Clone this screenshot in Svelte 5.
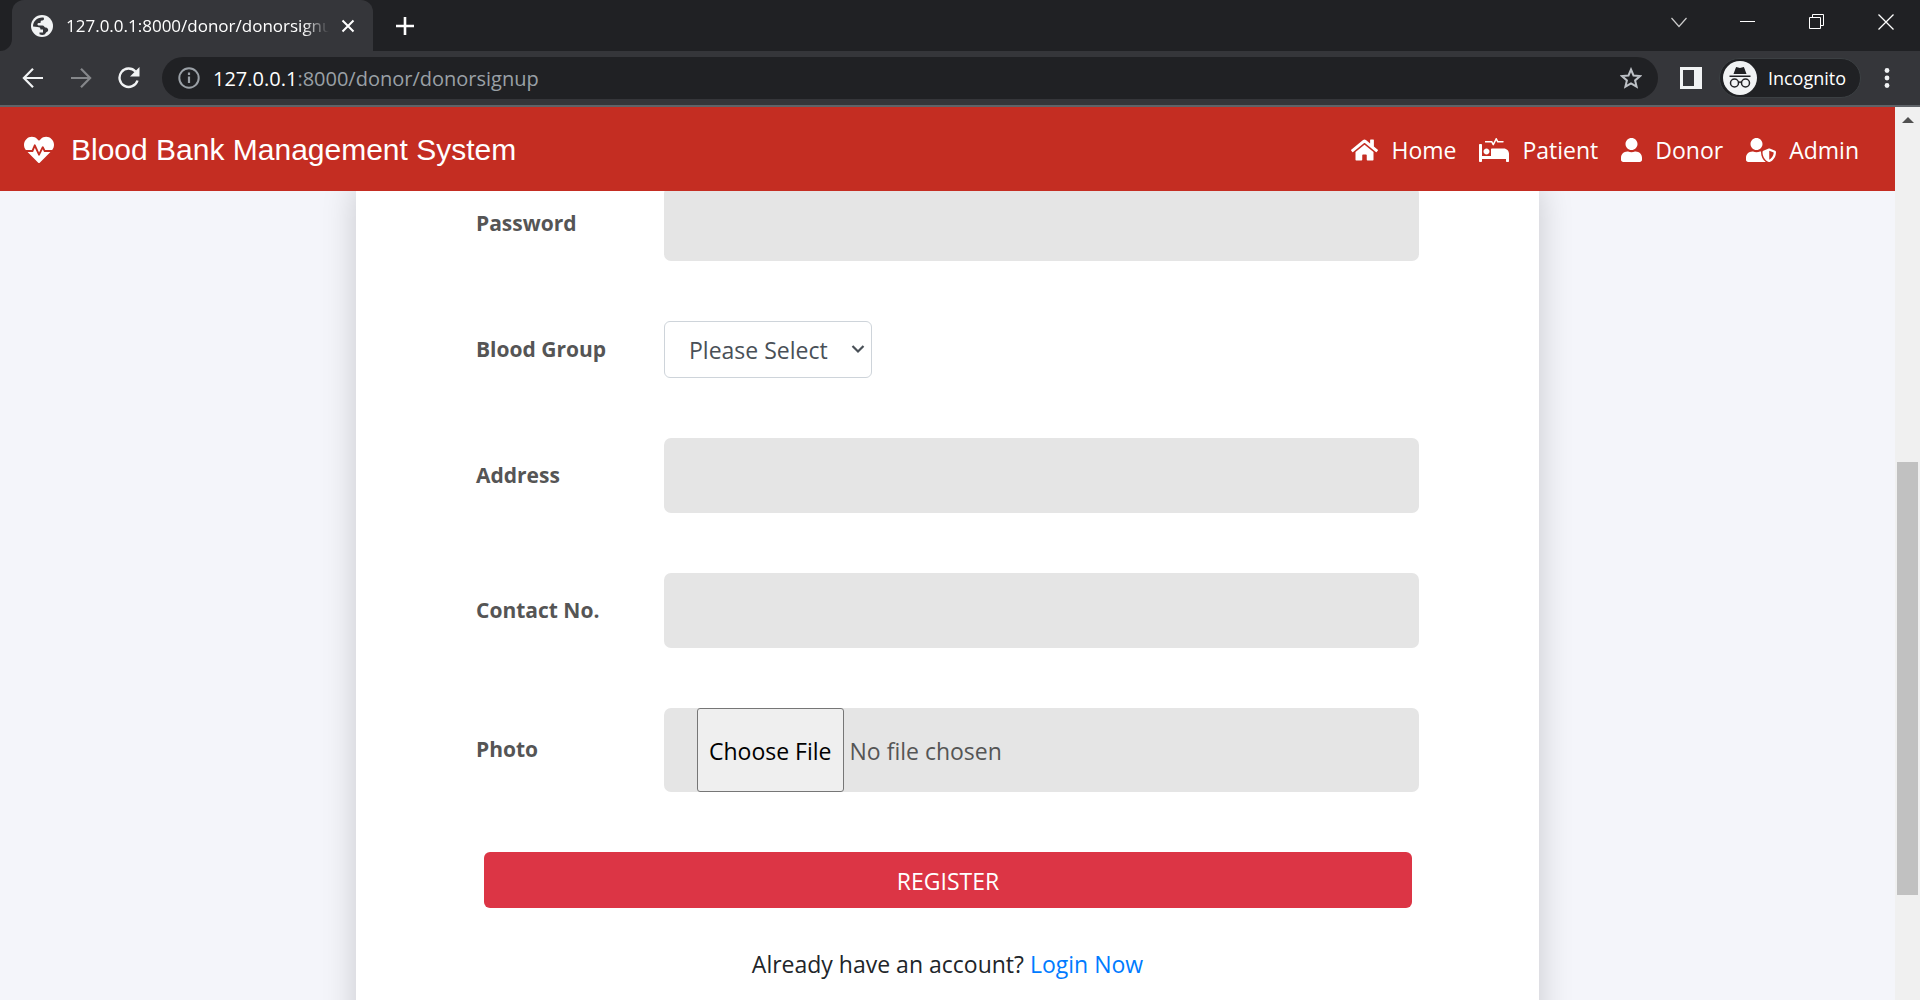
<script>
  const fields = [
    { id: 'address', label: 'Address', type: 'text' },
    { id: 'contact', label: 'Contact No.', type: 'text' }
  ];
  const groups = ['Please Select', 'O+', 'O-', 'A+', 'A-', 'B+', 'B-', 'AB+', 'AB-'];
  const nav = [
    { label: 'Home', size: 'w27', box: '0 0 576 512', d: 'M280.37 148.26L96 300.11V464a16 16 0 0 0 16 16l112.06-.29a16 16 0 0 0 15.92-16V368a16 16 0 0 1 16-16h64a16 16 0 0 1 16 16v95.64a16 16 0 0 0 16 16.05L464 480a16 16 0 0 0 16-16V300L295.67 148.26a12.19 12.19 0 0 0-15.3 0zM571.6 251.47L488 182.56V44.05a12 12 0 0 0-12-12h-56a12 12 0 0 0-12 12v72.61L318.47 43a48 48 0 0 0-61 0L4.34 251.47a12 12 0 0 0-1.6 16.9l25.5 31A12 12 0 0 0 45.15 301l235.22-193.74a12.19 12.19 0 0 1 15.3 0L530.9 301a12 12 0 0 0 16.9-1.6l25.5-31a12 12 0 0 0-1.7-16.93z' },
    { label: 'Patient', size: 'w30', box: '0 0 640 512', d: 'M528 224H272c-8.8 0-16 7.2-16 16v144H64V144c0-8.8-7.2-16-16-16H16c-8.8 0-16 7.2-16 16v352c0 8.8 7.2 16 16 16h32c8.8 0 16-7.2 16-16v-48h512v48c0 8.8 7.2 16 16 16h32c8.8 0 16-7.2 16-16V336c0-61.9-50.1-112-112-112zM136 96h126.1l27.6 55.2c5.9 11.8 22.7 11.8 28.6 0L368 51.8 390.1 96H512c8.8 0 16-7.2 16-16s-7.2-16-16-16H409.9L382.3 8.8C376.4-3 359.6-3 353.7 8.8L304 108.2l-19.9-39.8c-1.4-2.7-4.1-4.4-7.2-4.4H136c-4.4 0-8 3.6-8 8v16c0 4.4 3.6 8 8 8zm24 256c35.3 0 64-28.7 64-64s-28.7-64-64-64-64 28.7-64 64 28.7 64 64 64z' },
    { label: 'Donor', size: 'w21', box: '0 0 448 512', d: 'M224 256c70.7 0 128-57.3 128-128S294.7 0 224 0 96 57.3 96 128s57.3 128 128 128zm89.6 32h-16.7c-22.2 10.2-46.9 16-72.9 16s-50.6-5.8-72.9-16h-16.7C60.2 288 0 348.2 0 422.4V464c0 26.5 21.5 48 48 48h352c26.5 0 48-21.5 48-48v-41.6c0-74.2-60.2-134.4-134.4-134.4z' },
    { label: 'Admin', size: 'w30', box: '0 0 640 512', d: 'M622.3 271.1l-115.2-45c-4.1-1.6-12.6-3.7-22.2 0l-115.2 45c-10.7 4.2-17.7 14-17.7 24.9 0 111.6 68.7 188.8 132.9 213.9 9.6 3.7 18 1.6 22.2 0C558.4 489.9 640 420.5 640 296c0-10.9-7-20.7-17.7-24.9zM496 462.4V273.3l95.5 37.3c-5.6 87.1-60.9 135.4-95.5 151.8zM224 256c70.7 0 128-57.3 128-128S294.7 0 224 0 96 57.3 96 128s57.3 128 128 128zm96 40c0-2.5.8-4.8 1.1-7.2-2.5-.1-4.9-.8-7.5-.8h-16.7c-22.2 10.2-46.9 16-72.9 16s-50.6-5.8-72.9-16h-16.7C60.2 288 0 348.2 0 422.4V464c0 26.5 21.5 48 48 48h352c6.8 0 13.3-1.5 19.2-4-54-42.9-99.2-116.7-99.2-212z' }
  ];
</script>

<div class="window">
  <div class="tabstrip">
    <div class="prev-tab"></div>
    <div class="tab">
      <svg class="favicon" viewBox="0 0 24 24"><circle cx="12" cy="12" r="11" fill="#f1f3f4"/><path fill="#35363a" d="M13.500 3.500C7 3 3 7.500 3 12.500l4.500.5c2 0 3 .8 3 2.500h2.500v3H9.500v1.800c2 .9 4 .7 5.500 0 .5-1.800 2-2.300 3-3.300.8-1.500-.5-3.500-2.500-3.500-1 0-1.500-2-3-2H8.500c-1.500 0-1.500-2.500 0-2.500h2c0-2 .5-2.500 2-2.500 1.500-.3 2-1.500 1-3z"/></svg>
      <span class="tab-title">127.0.0.1:8000/donor/donorsignup</span>
      <button class="icon-btn tab-close" aria-label="Close tab"><svg viewBox="0 0 14 14"><path d="M1.500 1.500l11 11M12.500 1.500l-11 11" stroke="#fff" stroke-width="2"/></svg></button>
    </div>
    <button class="icon-btn new-tab" aria-label="New tab"><svg viewBox="0 0 18 18"><path d="M9 0v18M0 9h18" stroke="#fff" stroke-width="2.600"/></svg></button>
    <div class="controls">
      <button class="icon-btn" aria-label="Search tabs"><svg viewBox="0 0 16 16"><path d="M0.500 4l7.500 8.500L15.500 4" fill="none" stroke="#ccc" stroke-width="1.200"/></svg></button>
      <button class="icon-btn" aria-label="Minimize"><svg viewBox="0 0 16 16"><path d="M0 7.500h15" stroke="#fff"/></svg></button>
      <button class="icon-btn" aria-label="Restore"><svg viewBox="0 0 16 16"><path d="M.5 3.500h11v11H.5zM3.500 3.500v-3h11v11h-3" fill="none" stroke="#fff"/></svg></button>
      <button class="icon-btn" aria-label="Close"><svg viewBox="0 0 16 16"><path d="M.5.5l15 15M15.500.5l-15 15" stroke="#fff" stroke-width="1.300"/></svg></button>
    </div>
  </div>

  <div class="toolbar">
    <button class="icon-btn tool" aria-label="Back"><svg viewBox="0 0 22 22"><path d="M21 11H2.500M11 1.800L1.900 11l9.100 9.200" fill="none" stroke="#f1f3f4" stroke-width="2.200"/></svg></button>
    <button class="icon-btn tool" aria-label="Forward"><svg viewBox="0 0 22 22"><path d="M1 11h18.500M11 1.800l9.100 9.200-9.100 9.200" fill="none" stroke="#85878a" stroke-width="2.200"/></svg></button>
    <button class="icon-btn tool" aria-label="Reload"><svg viewBox="0 0 22 22"><path d="M19.500 13.500A9.200 9.200 0 1 1 17.500 4.500" fill="none" stroke="#f1f3f4" stroke-width="2.400"/><path d="M21.500 0v9.500H12z" fill="#f1f3f4"/></svg></button>
    <div class="omnibox">
      <svg class="info" viewBox="0 0 22 22"><circle cx="11" cy="11" r="9.700" fill="none" stroke="#9aa0a6" stroke-width="2"/><path d="M11 9.500v6.500M11 5.500v2.400" stroke="#9aa0a6" stroke-width="2.200"/></svg>
      <div class="url">127.0.0.1<span>:8000/donor/donorsignup</span></div>
      <button class="icon-btn tool" aria-label="Bookmark"><svg viewBox="0 0 22 22"><path d="M11 2.500l2.500 6 6.500.6-4.900 4.300 1.500 6.300L11 16.300l-5.600 3.400 1.500-6.300L2 9.100l6.500-.6z" fill="none" stroke="#bdc1c6" stroke-width="2"/></svg></button>
    </div>
    <button class="icon-btn tool side" aria-label="Side panel"><svg viewBox="0 0 22 22"><path fill="#f1f3f4" fill-rule="evenodd" d="M0 0h22v22H0zM3 3v16h11V3z"/></svg></button>
    <button class="chip">
      <svg viewBox="0 0 34 34"><circle cx="17" cy="17" r="17" fill="#f1f3f4"/><path d="M6.500 14.500h21v1.400h-21zM10.500 13l2.300-6.300c.3-.7.800-.7 1.300-.5l2.900.8 2.900-.8c.5-.2 1-.2 1.300.5L23.500 13z" fill="#202124"/><g fill="none" stroke="#202124" stroke-width="1.500"><circle cx="11.500" cy="22" r="4"/><circle cx="22.500" cy="22" r="4"/><path d="M15.500 21.500q1.500-1 3 0"/></g></svg>
      Incognito
    </button>
    <button class="icon-btn tool" aria-label="Menu"><svg viewBox="0 0 22 22"><g fill="#f1f3f4"><circle cx="11" cy="3.500" r="2.400"/><circle cx="11" cy="11" r="2.400"/><circle cx="11" cy="18.500" r="2.400"/></g></svg></button>
  </div>

  <div class="viewport">
    <div class="page">
      <header>
        <a class="brand" href="/">
          <svg viewBox="0 0 512 512"><path fill="#fff" d="M320.200 243.800l-49.700 99.400c-6 12.100-23.400 11.700-28.900-.6l-56.900-126.300-30 71.700H60.600l182.500 186.500c7.100 7.300 18.600 7.300 25.700 0L451.400 288H342.300l-22.100-44.200zM473.700 73.900l-2.400-2.500c-51.500-52.600-135.800-52.600-187.400 0L256 100l-27.900-28.500c-51.500-52.700-135.900-52.700-187.400 0l-2.400 2.400C-10.400 123.700-12.500 203 31 256h102.400l35.900-86.200c5.400-12.900 23.600-13.200 29.400-.4l58.200 129.300 49-97.900c5.900-11.800 22.700-11.800 28.600 0l27.600 55.200H481c43.500-53 41.400-132.300-7.300-182.100z"/></svg>
          Blood Bank Management System
        </a>
        <nav>
          {#each nav as item}
            <a href="/{item.label.toLowerCase()}"><svg class={item.size} viewBox={item.box}><path fill="#fff" d={item.d}/></svg>{item.label}</a>
          {/each}
        </nav>
      </header>

      <main>
        <form class="card" onsubmit={(e) => e.preventDefault()}>
          <div class="row">
            <label for="password">Password</label>
            <input id="password" class="field" type="password" />
          </div>
          <div class="row">
            <label for="group">Blood Group</label>
            <div class="select-wrap">
              <select id="group">
                {#each groups as g}<option>{g}</option>{/each}
              </select>
              <svg viewBox="0 0 14 10"><path d="M1.500 2L7 7.500 12.500 2" fill="none" stroke="#495057" stroke-width="2.200"/></svg>
            </div>
          </div>
          {#each fields as f}
            <div class="row">
              <label for={f.id}>{f.label}</label>
              <input id={f.id} class="field" type={f.type} />
            </div>
          {/each}
          <div class="row">
            <label for="photo">Photo</label>
            <input id="photo" class="file" type="file" />
          </div>
          <button class="register" type="submit">REGISTER</button>
          <p>Already have an account? <a href="/login">Login Now</a></p>
        </form>
      </main>
    </div>
    <div class="scrollbar">
      <svg viewBox="0 0 12 6"><path d="M0 6l6-6 6 6z" fill="#505050"/></svg>
      <div class="thumb"></div>
    </div>
  </div>
</div>

<style>
  :global(body) { margin: 0; }
  * { box-sizing: border-box; }
  .window { height: 100vh; display: flex; flex-direction: column; overflow: hidden; font-family: "Open Sans", "Noto Sans", sans-serif; }
  button { font-family: inherit; cursor: pointer; }
  svg { display: block; flex: none; }
  a { text-decoration: none; }
  .icon-btn { border: 0; padding: 0; background: none; flex: none; }

  .tabstrip { display: flex; align-items: stretch; flex: none; height: 51px; background: #202124; }
  .prev-tab { width: 12px; background: #35363a; }
  .prev-tab::before { content: ""; display: block; height: 100%; background: #202124; border-bottom-right-radius: 12px; }
  .tab { width: 361px; display: flex; align-items: center; padding: 0 18px; background: #35363a; border-radius: 12px 12px 0 0; }
  .favicon { width: 24px; height: 24px; }
  .tab-title { flex: 1; margin: 0 12px; overflow: hidden; white-space: nowrap; color: #fff; font-size: 17px; mask-image: linear-gradient(to right, #000 90%, transparent); }
  .tab-close svg { width: 14px; height: 14px; }
  .new-tab { margin-left: 23px; }
  .new-tab svg { width: 18px; height: 18px; }
  .controls { display: flex; gap: 53px; margin-left: auto; padding-right: 26px; padding-bottom: 8px; }
  .controls svg { width: 16px; height: 16px; }

  .toolbar { display: flex; align-items: center; flex: none; height: 56px; padding: 0 22px; background: #35363a; border-bottom: 2px solid #5f6368; }
  .tool svg { width: 22px; height: 22px; }
  .tool + .tool { margin-left: 26px; }
  .omnibox { flex: 1; display: flex; align-items: center; height: 42px; margin-left: 22px; padding: 0 16px; border-radius: 21px; background: #202124; }
  .info { width: 22px; height: 22px; }
  .url { flex: 1; margin-left: 13px; font-size: 20px; color: #fff; }
  .url span { color: #9aa0a6; }
  .side { margin-left: 22px; }
  .chip { display: flex; align-items: center; gap: 11px; height: 40px; margin: 0 15px 0 17px; padding: 0 14px 0 3px; border: 1px solid #3c4043; border-radius: 20px; background: #202124; color: #fff; font-size: 18px; }
  .chip svg { width: 34px; height: 34px; }

  .viewport { flex: 1; display: flex; min-height: 0; }
  .page { flex: 1; display: flex; flex-direction: column; overflow: hidden; background: #f4f5fa; }
  header { display: flex; align-items: center; justify-content: space-between; flex: none; height: 84px; padding: 2px 36px 0 24px; background: #c42d22; z-index: 1; }
  .brand { display: flex; align-items: center; gap: 17px; color: #fff; font: 30px/36px "Liberation Sans", Arial, sans-serif; }
  .brand svg { width: 30px; height: 30px; }
  nav { display: flex; gap: 23px; }
  nav a { display: flex; align-items: center; gap: 13px; color: #fff; font-size: 23px; }
  nav svg { height: 24px; }
  .w21 { width: 21px; }
  .w27 { width: 27px; }
  .w30 { width: 30px; }

  main { display: flex; justify-content: center; margin-top: -5px; }
  .card { width: 1183px; max-width: 62.45%; display: flex; flex-direction: column; gap: 60px; padding: 0 120px 60px; background: #fff; box-shadow: 0 0 32px rgba(0, 0, 0, 0.18); }
  .row { display: grid; grid-template-columns: 188px 1fr; align-items: center; }
  label { padding-bottom: 2px; color: #555; font-size: 21px; font-weight: 700; }
  .field { width: 100%; height: 75px; padding: 0 33px; border: 0; border-radius: 7px; background: #e5e5e5; font: inherit; font-size: 23px; }
  .select-wrap { position: relative; justify-self: start; }
  select { appearance: none; display: block; width: 208px; height: 57px; padding: 1px 24px 0; border: 1px solid #ced4da; border-radius: 6px; background: #fff; color: #495057; font-family: inherit; font-size: 23px; }
  .select-wrap svg { position: absolute; right: 7px; top: 23px; width: 14px; height: 10px; pointer-events: none; }
  .file { width: 100%; height: 84px; padding: 0 0 0 33px; border-radius: 7px; background: #e5e5e5; color: #555; font-family: inherit; font-size: 23px; }
  .file::file-selector-button { height: 84px; margin: 0 6px 0 0; padding: 2px 11px 0; border: 1px solid #767676; border-radius: 3px; background: #efefef; color: #000; font: inherit; }
  .register { height: 56px; margin: 0 7px 0 8px; padding: 2px 0 0; border: 0; border-radius: 6px; background: #dc3545; color: #fff; font-size: 23px; }
  p { margin: -22px 0 0; text-align: center; color: #212529; font-size: 23px; line-height: 36px; }
  p a { color: #007bff; }

  .scrollbar { flex: none; width: 25px; display: flex; flex-direction: column; align-items: center; padding-top: 10px; background: #f0f0f0; }
  .scrollbar svg { width: 12px; height: 6px; }
  .thumb { width: 21px; height: 433px; margin-top: 339px; background: #c1c1c1; }
</style>
